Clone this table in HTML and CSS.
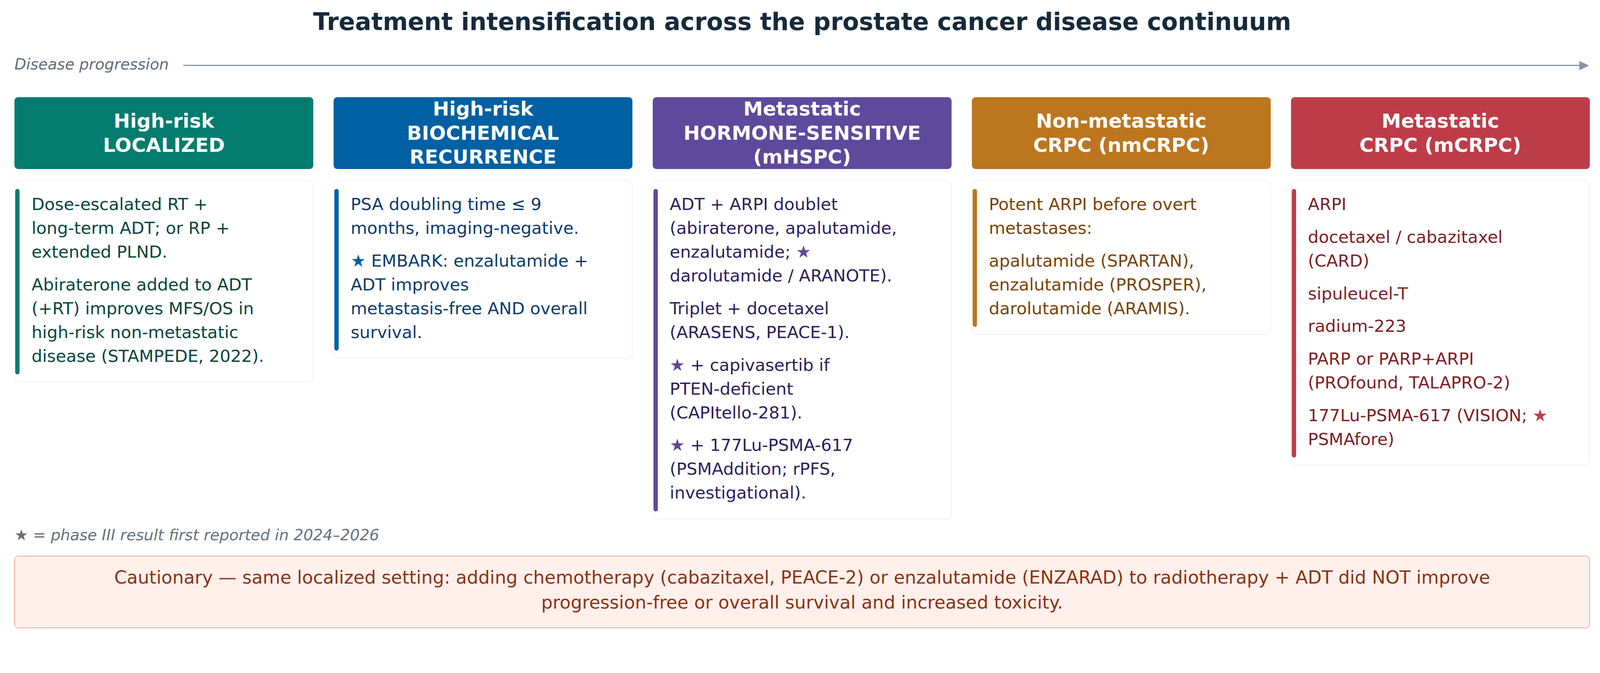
FILE: index.html
```html
<!DOCTYPE html>
<html lang="en">
<head>
<meta charset="utf-8">
<title>Treatment intensification across the prostate cancer disease continuum</title>
<link rel="stylesheet" href="styles.css">
</head>
<body>
<main class="page">
  <h1 class="title">Treatment intensification across the prostate cancer disease continuum</h1>

  <div class="progress">
    <span class="progress-label">Disease progression</span>
    <span class="progress-arrow"><span class="progress-line"></span><span class="progress-head"></span></span>
  </div>

  <section class="stages">
    <div class="stage-head teal">High-risk<br>LOCALIZED</div>
    <div class="stage-head blue">High-risk<br>BIOCHEMICAL<br>RECURRENCE</div>
    <div class="stage-head purple">Metastatic<br>HORMONE-SENSITIVE<br>(mHSPC)</div>
    <div class="stage-head orange">Non-metastatic<br>CRPC (nmCRPC)</div>
    <div class="stage-head red">Metastatic<br>CRPC (mCRPC)</div>

    <div class="card teal">
      <div class="card-bar"></div>
      <div class="card-body">
        <p>Dose-escalated RT +<br>long-term ADT; or RP +<br>extended PLND.</p>
        <p>Abiraterone added to ADT<br>(+RT) improves MFS/OS in<br>high-risk non-metastatic<br>disease (STAMPEDE, 2022).</p>
      </div>
    </div>

    <div class="card blue">
      <div class="card-bar"></div>
      <div class="card-body">
        <p>PSA doubling time ≤ 9<br>months, imaging-negative.</p>
        <p><span class="star">★</span> EMBARK: enzalutamide +<br>ADT improves<br>metastasis-free AND overall<br>survival.</p>
      </div>
    </div>

    <div class="card purple">
      <div class="card-bar"></div>
      <div class="card-body">
        <p>ADT + ARPI doublet<br>(abiraterone, apalutamide,<br>enzalutamide; <span class="star">★</span><br>darolutamide / ARANOTE).</p>
        <p>Triplet + docetaxel<br>(ARASENS, PEACE-1).</p>
        <p><span class="star">★</span> + capivasertib if<br>PTEN-deficient<br>(CAPItello-281).</p>
        <p><span class="star">★</span> + 177Lu-PSMA-617<br>(PSMAddition; rPFS,<br>investigational).</p>
      </div>
    </div>

    <div class="card orange">
      <div class="card-bar"></div>
      <div class="card-body">
        <p>Potent ARPI before overt<br>metastases:</p>
        <p>apalutamide (SPARTAN),<br>enzalutamide (PROSPER),<br>darolutamide (ARAMIS).</p>
      </div>
    </div>

    <div class="card red">
      <div class="card-bar"></div>
      <div class="card-body">
        <p>ARPI</p>
        <p>docetaxel / cabazitaxel<br>(CARD)</p>
        <p>sipuleucel-T</p>
        <p>radium-223</p>
        <p>PARP or PARP+ARPI<br>(PROfound, TALAPRO-2)</p>
        <p>177Lu-PSMA-617 (VISION; <span class="star">★</span><br>PSMAfore)</p>
      </div>
    </div>
  </section>

  <p class="footnote">★ = phase III result first reported in 2024–2026</p>

  <div class="caution">
    <p>Cautionary — same localized setting: adding chemotherapy (cabazitaxel, PEACE-2) or enzalutamide (ENZARAD) to radiotherapy + ADT did NOT improve<br>progression-free or overall survival and increased toxicity.</p>
  </div>
</main>
</body>
</html>
```

FILE: styles.css
```css
html, body {
  margin: 0;
  padding: 0;
  background: #ffffff;
}

body {
  font-family: "DejaVu Sans", "Liberation Sans", sans-serif;
}

.page {
  width: 4033px;
  margin-left: 37px;
}

.title {
  margin: 0;
  padding-top: 20px;
  font-size: 61.6px;
  line-height: 72px;
  font-weight: 700;
  color: #152a3c;
  text-align: center;
}

.progress {
  display: flex;
  align-items: center;
  margin-top: 50px;
  height: 46px;
}

.progress-label {
  font-size: 39px;
  line-height: 46px;
  font-style: italic;
  color: #5f6b7a;
  white-space: nowrap;
}

.progress-arrow {
  flex: 1;
  display: flex;
  align-items: center;
  margin-left: 37px;
  margin-right: 2px;
  margin-top: 5px;
}

.progress-line {
  flex: 1;
  height: 3.8px;
  background: #8896a5;
}

.progress-head {
  width: 0;
  height: 0;
  border-left: 25px solid #8896a5;
  border-top: 12.9px solid transparent;
  border-bottom: 12.9px solid transparent;
}

.stages {
  display: grid;
  grid-template-columns: repeat(5, minmax(0, 1fr));
  column-gap: 51.4px;
  row-gap: 29.5px;
  align-items: start;
  margin-top: 60.7px;
}

.teal   { --accent: #027c6e; --ink: #07463b; }
.blue   { --accent: #0060a4; --ink: #0c3b6c; }
.purple { --accent: #5e4a9c; --ink: #2b1f5c; }
.orange { --accent: #bc761e; --ink: #7a4306; }
.red    { --accent: #bc3d48; --ink: #7f1d24; }

.stage-head {
  height: 184px;
  display: flex;
  align-items: center;
  justify-content: center;
  text-align: center;
  background: var(--accent);
  color: #ffffff;
  border-radius: 9.5px;
  font-size: 50.3px;
  line-height: 61.5px;
  font-weight: 700;
  white-space: nowrap;
}

.card {
  display: flex;
  align-items: stretch;
  background: #ffffff;
  border: 1px solid #e2e2e2;
  border-radius: 13px;
  padding: 21px 23px 19px 1px;
}

.card-bar {
  flex: none;
  width: 11.4px;
  border-radius: 5.7px;
  background: var(--accent);
}

.card-body {
  min-width: 0;
  padding: 8.6px 0 16.2px 30.4px;
  font-size: 43.3px;
  line-height: 61px;
  color: var(--ink);
  white-space: nowrap;
}

.card-body p {
  margin: 0;
}

.card-body p + p {
  margin-top: 22.9px;
}

.star {
  color: var(--accent);
}

.footnote {
  margin: 18px 0 0;
  font-size: 39.2px;
  line-height: 46px;
  font-style: italic;
  color: #64717f;
}

.caution {
  margin-top: 30.6px;
  background: #fff0eb;
  border: 1.9px solid #e06236;
  border-radius: 9.5px;
  padding: 23px 40px 33px;
  text-align: center;
}

.caution p {
  margin: 0;
  font-size: 46.1px;
  line-height: 63.3px;
  color: #8c3212;
  white-space: nowrap;
}
```
